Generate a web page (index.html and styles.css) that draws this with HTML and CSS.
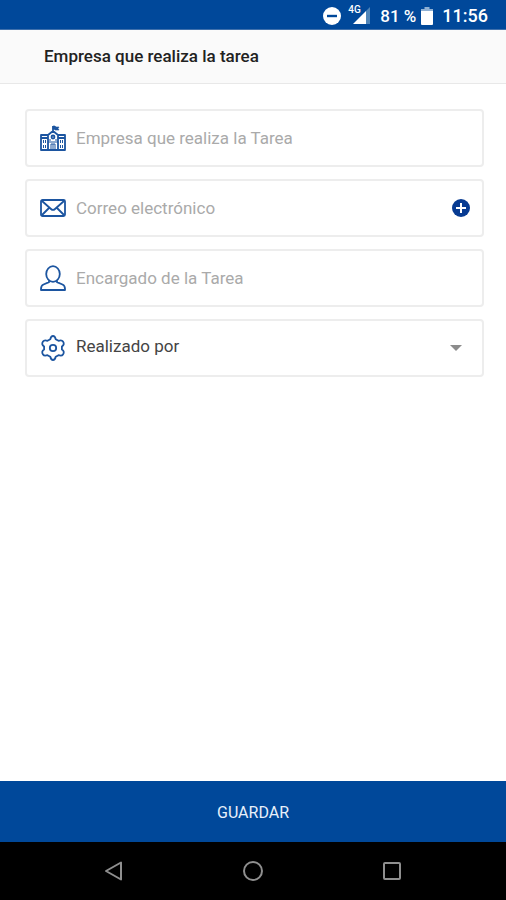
FILE: index.html
```html
<!DOCTYPE html>
<html lang="es">
<head>
<meta charset="utf-8">
<meta name="viewport" content="width=device-width, initial-scale=1">
<title>Empresa que realiza la tarea</title>
<link rel="stylesheet" href="styles.css">
</head>
<body>
<div class="status">
  <svg class="status-dnd" viewBox="0 0 18 18" aria-hidden="true"><circle cx="9" cy="9" r="9" fill="#fff"/><path d="M4 9h10" stroke="#00489a" stroke-width="2.4"/></svg>
  <span class="signal">
    <span class="signal-type">4G</span>
    <svg viewBox="0 0 18 17" aria-hidden="true"><path d="M18 0v17H14V4z" fill="#4f84b8"/><path d="M14 4v13H1z" fill="#fff"/></svg>
  </span>
  <span class="battery-level">81 %</span>
  <svg class="status-battery" viewBox="0 0 12 18" aria-hidden="true"><path d="M3.500 0h5v2H12v3H0V2h3.500z" fill="#8fb0d3"/><path d="M0 4h12v13a1 1 0 0 1-1 1H1a1 1 0 0 1-1-1z" fill="#fff"/></svg>
  <time class="clock">11:56</time>
</div>
<header class="header"><h1 class="title">Empresa que realiza la tarea</h1></header>
<form class="form">
  <main class="fields">
    <label class="field">
      <svg class="icon" viewBox="0 0 26 26" aria-hidden="true"><path d="M1 25V10h7l5-4 5 4h7v15zM8 10v15M18 10v15M1 13h7M18 13h7M13 6V1" /><path d="M13 1h2l1 1h3l-1 1.500 1 1.500h-4l-1-1h-1z" fill="currentColor" stroke-width=".6"/><circle cx="13" cy="12" r="1.500"/><path d="M11 25v-6h4v6M13 19v6M3.500 15v3M5.500 15v3M20.500 15v3M22.500 15v3M3.500 20v3M5.500 20v3M20.500 20v3M22.500 20v3M8 17h10M10 14v2M16 14v2" stroke-width="1"/></svg>
      <input class="control" type="text" placeholder="Empresa que realiza la Tarea" aria-label="Empresa que realiza la Tarea">
    </label>
    <div class="field">
      <svg class="icon" viewBox="0 0 26 26" aria-hidden="true"><rect x="1" y="5" width="24" height="16" rx="1.500"/><path d="M2 6l9 8q2 1.800 4 0l9-8M2 20l7-7M24 20l-7-7"/></svg>
      <input class="control" type="email" placeholder="Correo electrónico" aria-label="Correo electrónico">
      <button class="add" type="button" aria-label="Añadir correo"><svg viewBox="0 0 18 18" aria-hidden="true"><circle cx="9" cy="9" r="9" fill="#073b92"/><path d="M9 4v10M4 9h10" stroke="#fff" stroke-width="2"/></svg></button>
    </div>
    <label class="field">
      <svg class="icon" viewBox="0 0 26 26" aria-hidden="true"><ellipse cx="13" cy="9" rx="6.800" ry="7.800"/><path d="M9 15.500v1.700L3.500 19.500Q1 20.600 1 24v1h24v-1q0-3.400-2.500-4.500L17 17.200v-1.700"/></svg>
      <input class="control" type="text" placeholder="Encargado de la Tarea" aria-label="Encargado de la Tarea">
    </label>
    <label class="field">
      <svg class="icon" viewBox="0 0 26 26" aria-hidden="true"><path d="M10.300 4.200Q11 1 13 1t2.700 3.200l2.800 1.600Q21.800 4.700 23 6.500q2 3-1.100 5v3q3.100 2 1.100 5-1.200 1.800-4.500.7l-2.800 1.600Q15 25 13 25t-2.700-3.200l-2.800-1.600Q4.200 21.300 3 19.500q-2-3 1.100-5v-3Q1 9.500 3 6.500q1.200-1.800 4.500-.7z"/><circle cx="13" cy="13" r="3.200"/></svg>
      <select class="control select" aria-label="Realizado por"><option>Realizado por</option></select>
      <svg class="arrow" viewBox="0 0 12 6" aria-hidden="true"><path d="M0 0h12L6 6z" fill="#8c8c8c"/></svg>
    </label>
  </main>
  <button class="save" type="submit">GUARDAR</button>
</form>
<nav class="nav" aria-label="Sistema">
  <button class="nav-button" type="button" aria-label="Atrás"><svg viewBox="0 0 20 20"><path d="M17 1.500v17L2 10z"/></svg></button>
  <button class="nav-button" type="button" aria-label="Inicio"><svg viewBox="0 0 20 20"><circle cx="10" cy="10" r="9"/></svg></button>
  <button class="nav-button" type="button" aria-label="Recientes"><svg viewBox="0 0 20 20"><rect x="2" y="2" width="16" height="16" rx="1"/></svg></button>
</nav>
</body>
</html>
```
FILE: styles.css
```css
* {
  box-sizing: border-box;
}

body {
  margin: 0;
  min-height: 100vh;
  display: flex;
  flex-direction: column;
  background: #fff;
  color: #222;
  font-family: Roboto, "Liberation Sans", sans-serif;
  font-size: 17px;
}

button,
input,
select {
  font: inherit;
  border: 0;
  padding: 0;
}

svg {
  display: block;
}

.status {
  display: flex;
  align-items: center;
  justify-content: flex-end;
  height: 30px;
  padding: 2px 18px 0 0;
  background: #00489a;
  border-bottom: 1px solid #3f70ac;
  color: #fff;
  font-weight: 500;
}

.status-dnd {
  width: 18px;
  height: 18px;
}

.signal {
  position: relative;
  margin: 0 10px 0 11px;
}

.signal svg {
  width: 18px;
  height: 17px;
}

.signal-type {
  position: absolute;
  top: -3px;
  left: -4px;
  font-size: 10px;
  line-height: 12px;
}

.status-battery {
  width: 12px;
  height: 18px;
  margin: 0 9px 0 5px;
}

.clock {
  font-size: 18px;
}

.header {
  display: flex;
  align-items: center;
  height: 54px;
  padding: 0 44px 2px;
  background: #fafafa;
  border-bottom: 1px solid #e8e8e8;
}

.title {
  margin: 0;
  font-size: 17px;
  font-weight: 500;
}

.form {
  flex: 1;
  display: flex;
  flex-direction: column;
}

.fields {
  flex: 1;
  display: flex;
  flex-direction: column;
  gap: 12px;
  padding: 25px 22px 24px 25px;
}

.field {
  display: flex;
  align-items: center;
  height: 58px;
  padding: 0 12px 0 13px;
  border: 2px solid #ededed;
  border-radius: 4px;
}

.icon {
  flex: none;
  width: 26px;
  height: 26px;
  margin-right: 10px;
  color: #1c55a0;
  fill: none;
  stroke: currentColor;
  stroke-width: 1.8;
  stroke-linejoin: round;
}

.control {
  flex: 1;
  min-width: 0;
  height: 100%;
  background: transparent;
  color: #444;
  outline: 0;
}

.control::placeholder {
  color: #aaa;
  opacity: 1;
}

.select {
  appearance: none;
  padding-bottom: 4px;
}

.add {
  flex: none;
  width: 18px;
  height: 18px;
  background: none;
}

.arrow {
  flex: none;
  width: 12px;
  height: 6px;
  margin-right: 8px;
}

.save {
  height: 61px;
  padding-top: 1px;
  background: #00489a;
  color: #e8f0fa;
  font-size: 16px;
}

.nav {
  display: grid;
  grid-template-columns: repeat(3, 1fr);
  height: 58px;
  padding: 0 44px;
  background: #000;
}

.nav-button {
  display: flex;
  align-items: center;
  justify-content: center;
  background: none;
}

.nav-button svg {
  width: 20px;
  height: 20px;
  fill: none;
  stroke: #8f8f8f;
  stroke-width: 2;
  stroke-linejoin: round;
}
```
